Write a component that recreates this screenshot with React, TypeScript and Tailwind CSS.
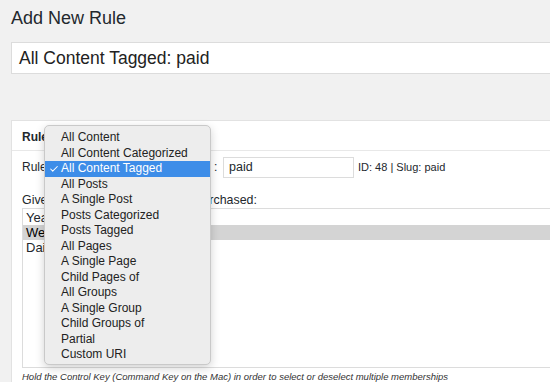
import { Check } from "lucide-react";

const ruleTypes = [
  "All Content",
  "All Content Categorized",
  "All Content Tagged",
  "All Posts",
  "A Single Post",
  "Posts Categorized",
  "Posts Tagged",
  "All Pages",
  "A Single Page",
  "Child Pages of",
  "All Groups",
  "A Single Group",
  "Child Groups of",
  "Partial",
  "Custom URI",
];

const memberships = ["Yearly", "Weekly", "Daily"];

export default function App() {
  const selected = "All Content Tagged";

  return (
    <div
      className="relative w-[550px] h-[382px] overflow-hidden bg-[#f1f1f1] text-[#23282d]"
      style={{ fontFamily: '"Liberation Sans", Arial, sans-serif' }}
    >
      <div className="w-[640px] pl-[11px]">
        <h1 className="pt-[6px] text-[18px] leading-[24px]">Add New Rule</h1>

        {/* rule title */}
        <div className="mt-[12px] h-[32px] border border-[#dcdcdc] bg-white pl-[7px] text-[17.5px] leading-[30px] text-[#222]">
          All Content Tagged: paid
        </div>

        {/* rule settings box */}
        <div className="mt-[46px] border border-[#e2e2e2] bg-white">
          <div className="h-[30px] border-b border-[#e8e8e8] pl-[10px] text-[12px] font-bold leading-[32px]">
            Rule Settings
          </div>
          <div className="pl-[10px] pt-[6px]">
            <div className="flex items-center h-[21px] text-[12px] leading-[23px]">
              <span className="w-[192px]">Rule:</span>
              <span className="w-[6px]">:</span>
              <div className="ml-[3px] w-[131px] h-[21px] border border-[#dcdcdc] pl-[5px] text-[12.5px] leading-[19px]">
                paid
              </div>
              <span className="ml-[4px] text-[11px]">ID: 48 | Slug: paid</span>
            </div>
            <div className="mt-[15px] text-[12.4px] leading-[15px]">
              Give these memberships when purchased:
            </div>
            <div className="h-[160px] border border-[#dcdcdc] pt-[1px] text-[13px]">
              {memberships.map((m) => (
                <div
                  key={m}
                  className={`h-[15px] pl-[3px] leading-[16px] ${
                    m === "Weekly" ? "bg-[#d4d4d4] text-black" : ""
                  }`}
                >
                  {m}
                </div>
              ))}
            </div>
            <p className="mt-[3px] pb-[10px] text-[9.5px] italic leading-[12px] text-[#333]">
              Hold the Control Key (Command Key on the Mac) in order to select or deselect multiple memberships
            </p>
          </div>
        </div>
      </div>

      {/* open select menu */}
      <div className="absolute left-[44px] top-[125px] w-[167px] h-[240px] rounded-[5px] border border-[#c9c9c9] bg-[#ededed] pt-[4px] shadow-[0_3px_10px_rgba(0,0,0,0.18)]">
        {ruleTypes.map((r) => (
          <div
            key={r}
            className={`relative h-[15.5px] pl-[16px] text-[12px] leading-[15.5px] ${
              r === selected ? "bg-[#3d8de8] text-white" : "text-[#222]"
            }`}
          >
            {r === selected && (
              <Check
                className="absolute left-[4px] top-[3px]"
                size={10}
                strokeWidth={2.5}
              />
            )}
            {r}
          </div>
        ))}
      </div>
    </div>
  );
}
